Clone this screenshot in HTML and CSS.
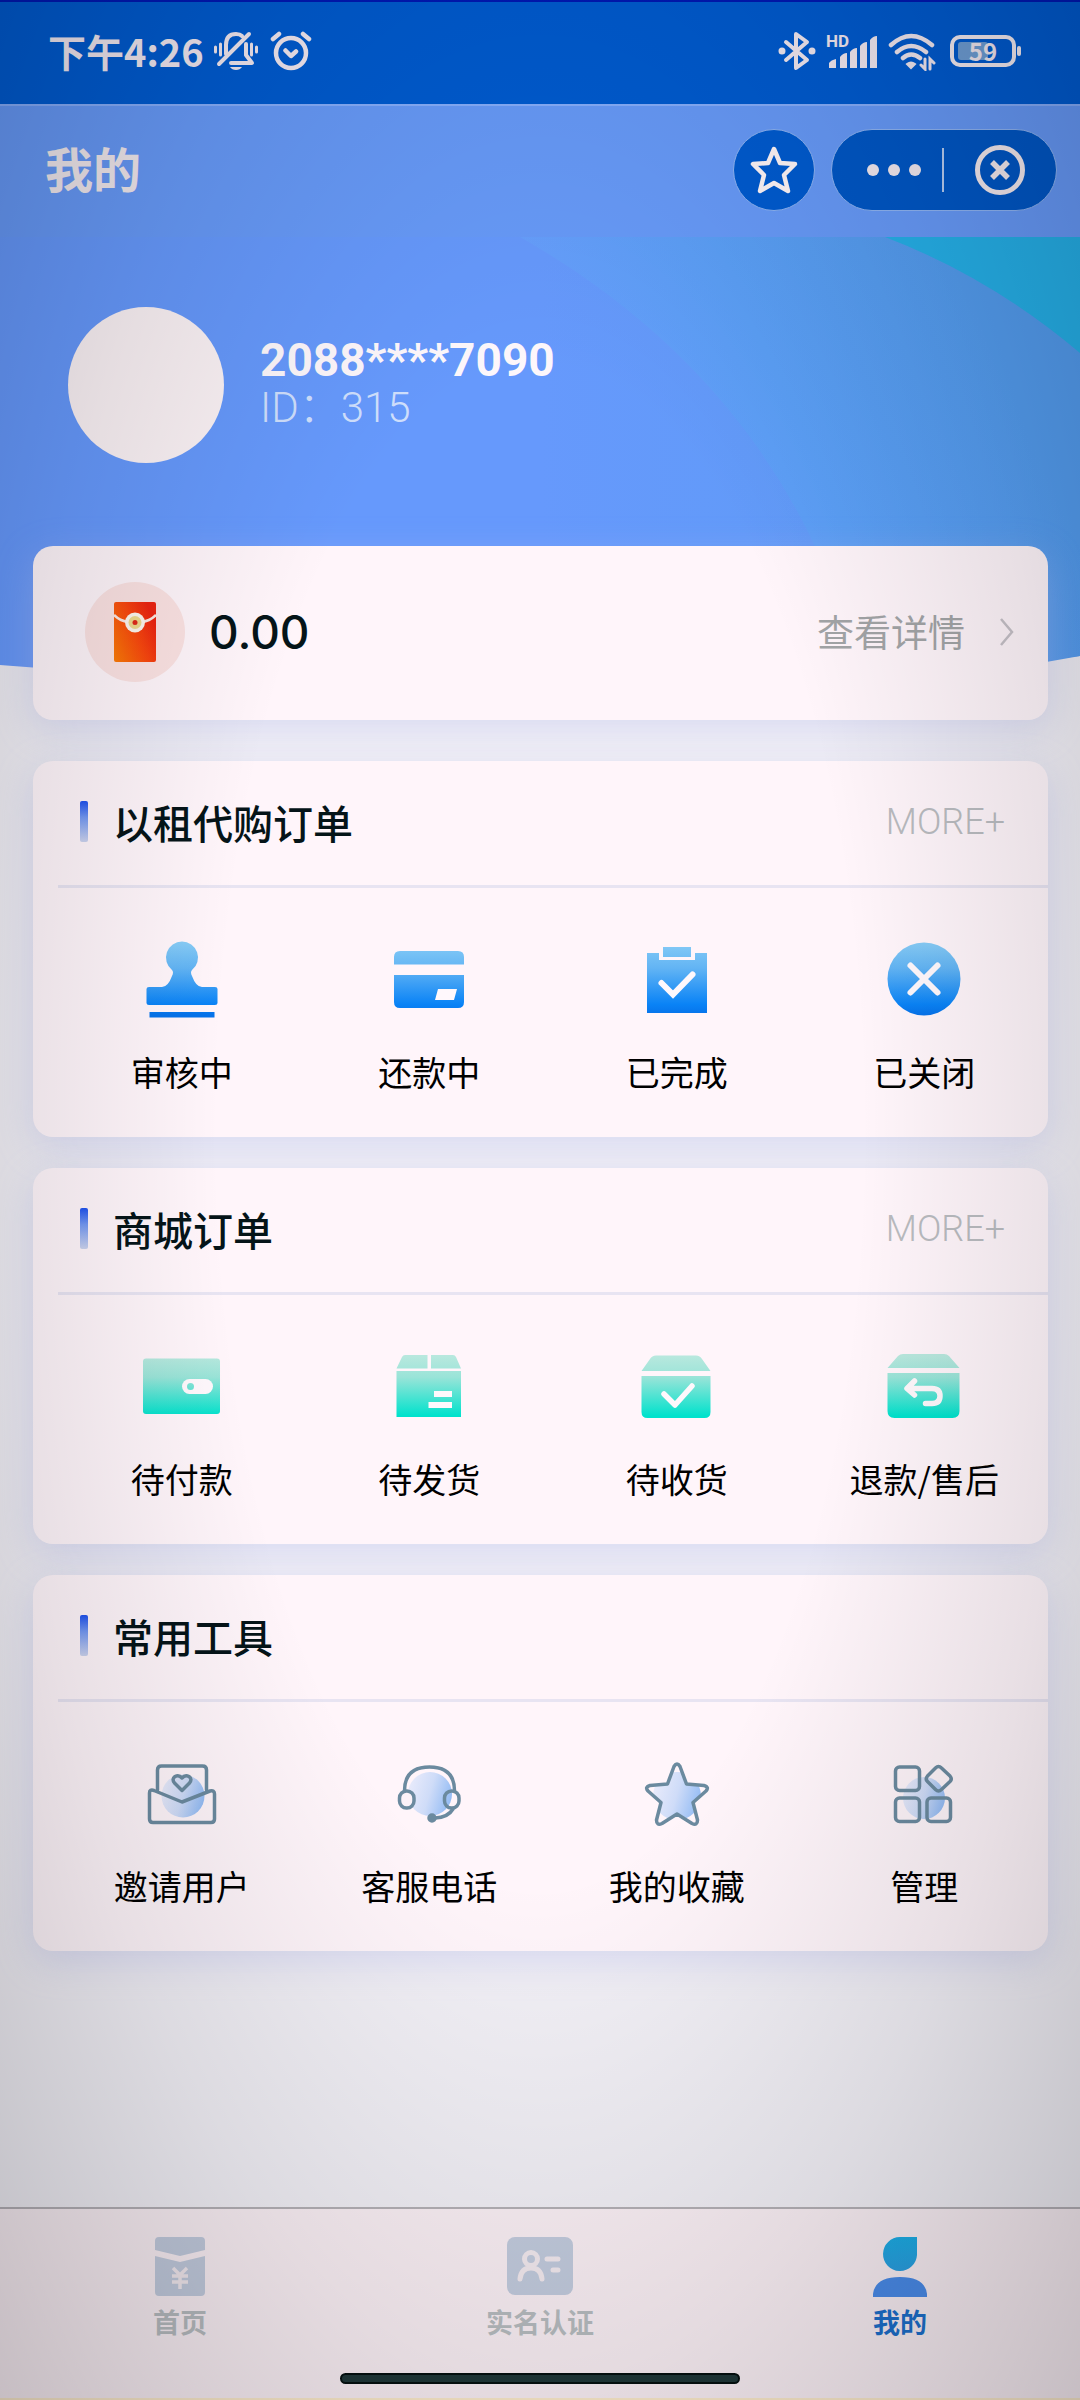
FILE: index.html
```html
<!DOCTYPE html>
<html lang="zh-CN">
<head>
<meta charset="utf-8">
<meta name="viewport" content="width=device-width, initial-scale=1">
<title>我的</title>
<link rel="stylesheet" href="styles.css">
</head>
<body>
<svg class="defs" aria-hidden="true">
  <defs>
    <linearGradient id="blue" gradientUnits="userSpaceOnUse" x1="0" y1="4" x2="0" y2="76"><stop offset="0" stop-color="#86cbf6"/><stop offset="0.35" stop-color="#62b4f4"/><stop offset="0.85" stop-color="#0a83f6"/><stop offset="1" stop-color="#0672ea"/></linearGradient>
    <linearGradient id="mint" gradientUnits="userSpaceOnUse" x1="0" y1="10" x2="0" y2="70"><stop offset="0" stop-color="#b8e8de"/><stop offset="0.35" stop-color="#9ae4d8"/><stop offset="1" stop-color="#00e2cc"/></linearGradient>
    <linearGradient id="haze" x1="0" y1="0.3" x2="1" y2="0.6"><stop offset="0" stop-color="#e9ebfb"/><stop offset="0.5" stop-color="#cfdcf8"/><stop offset="1" stop-color="#92bbf4"/></linearGradient>
    <linearGradient id="packet" x1="0" y1="1" x2="1" y2="0.4"><stop offset="0" stop-color="#fb7c06"/><stop offset="0.6" stop-color="#f9470e"/><stop offset="1" stop-color="#ec2411"/></linearGradient>
    <linearGradient id="person" x1="0" y1="0" x2="0" y2="1"><stop offset="0" stop-color="#1caee6"/><stop offset="1" stop-color="#2aa0e2"/></linearGradient>
    <linearGradient id="sky" x1="0" y1="0" x2="1" y2="0"><stop offset="0" stop-color="#6699fc"/><stop offset="0.5" stop-color="#6699fc"/><stop offset="1" stop-color="#5c9cf4"/></linearGradient>
    <linearGradient id="wave" gradientUnits="userSpaceOnUse" x1="620" y1="300" x2="1000" y2="130"><stop offset="0" stop-color="#689efd"/><stop offset="0.5" stop-color="#5b9ff6"/><stop offset="1" stop-color="#539cee"/></linearGradient>
  </defs>
</svg>

<div class="page">
  <div class="statusbar">
    <div class="status-group">
      <span class="clock">下午4:26</span>
      <svg class="bell" viewBox="0 0 44 40" fill="none" stroke="#f3eaf2" stroke-width="4" stroke-linecap="round" stroke-linejoin="round">
        <path d="M12 23V14Q12 3 22 3Q26 3 28 5M32 13V24L38 32H17M5 33L35 3"/>
        <path d="M16 36H28Q26 39 22 39Q18 39 16 36Z" fill="#f3eaf2" stroke="none"/>
        <path d="M1.500 16V21M6.500 13V24M37.500 13V24M42.500 16V21" stroke-width="3"/>
      </svg>
      <svg class="alarm" viewBox="0 0 42 40" fill="none" stroke="#f3eaf2" stroke-width="4.500" stroke-linecap="round" stroke-linejoin="round">
        <circle cx="21" cy="22" r="15"/><path d="M15.500 19.500L21 25L26 20.500M3 8L9 3M39 8L33 3"/>
      </svg>
    </div>
    <div class="status-group status-right">
      <svg class="bt" viewBox="0 0 38 40" fill="none" stroke="#f3eaf2" stroke-width="4" stroke-linecap="round" stroke-linejoin="round">
        <path d="M8 11L29 29L18 37V3L29 11L8 29"/><circle cx="4" cy="20" r="2.500" fill="#f3eaf2" stroke-width="2"/><circle cx="34" cy="20" r="2.500" fill="#f3eaf2" stroke-width="2"/>
      </svg>
      <svg class="signal" viewBox="0 0 52 40" fill="#f3eaf2">
        <path d="M3 37V32Q5 29 10 28V37ZM14 37V26Q17 22 21 22V37ZM24 37V21Q27 17 31 17V37ZM34 37V15Q37 11 41 11V37ZM44 37V9Q47 5 51 5V37Z"/>
        <text class="hd" x="0" y="16">HD</text>
      </svg>
      <svg class="wifi" viewBox="0 0 48 40" fill="none" stroke="#f3eaf2" stroke-width="4.500" stroke-linecap="round">
        <path d="M3 14Q23 -4 44 14M9 21Q23 9 38 21M15 27Q23 20 32 27"/><path d="M19 33Q23 30 27 33L23 37Z" fill="#f3eaf2" stroke-width="2"/><path d="M37 28V38L33 34M42 38V28L46 32" stroke-width="3"/>
      </svg>
      <div class="battery"><span class="battery-fill"></span><span class="battery-text">59</span></div>
    </div>
  </div>

  <header class="topbar">
    <h1 class="topbar-title">我的</h1>
    <div class="topbar-actions">
      <button class="fav" type="button" aria-label="收藏">
        <svg viewBox="0 0 48 48" fill="none" stroke="#fff6f8" stroke-width="4.500" stroke-linejoin="round"><path d="M24 3L30 17L45 18L34 29L38 45L24 37L10 45L14 29L3 18L18 17Z"/></svg>
      </button>
      <div class="capsule">
        <button class="capsule-btn more" type="button" aria-label="更多"><svg viewBox="0 0 54 12" fill="#f3eaf0"><circle cx="6" cy="6" r="6"/><circle cx="27" cy="6" r="6"/><circle cx="48" cy="6" r="6"/></svg></button>
        <button class="capsule-btn close" type="button" aria-label="关闭"><svg viewBox="0 0 52 52" fill="none" stroke="#f6ecf0" stroke-width="5"><circle cx="26" cy="26" r="22.500"/><path d="M18 18L34 34M34 18L18 34" stroke-width="5.500"/></svg></button>
      </div>
    </div>
  </header>

  <main class="content">
    <section class="hero">
      <svg class="hero-bg" viewBox="0 0 1080 453" preserveAspectRatio="none" aria-hidden="true">
        <path d="M0 0H1080V419Q810 450 540 450Q270 450 0 428Z" fill="url(#sky)"/>
        <path d="M520 0Q730 120 820 320Q850 385 862 445Q980 438 1080 419V0Z" fill="url(#wave)"/>
        <path d="M885 0Q990 40 1080 116V0Z" fill="#25b0e8"/>
      </svg>
      <div class="avatar"></div>
      <div class="who">
        <strong class="phone">2088****7090</strong>
        <span class="uid">ID：315</span>
      </div>
    </section>

    <a class="card wallet" href="#balance">
      <span class="packet"><svg viewBox="0 0 42 60"><rect x="0" y="0" width="42" height="60" rx="2" fill="url(#packet)"/><path d="M0 13Q6 19 14 20M42 13Q36 19 28 20" fill="none" stroke="#fbe9e4" stroke-width="2.500"/><circle cx="21" cy="20.500" r="10" fill="#fdf6ee"/><circle cx="21" cy="20.500" r="6.500" fill="#efd98c"/><circle cx="21" cy="20.500" r="2.500" fill="#e02a18"/></svg></span>
      <span class="amount">0.00</span>
      <span class="detail">查看详情</span>
      <svg class="chevron" viewBox="0 0 14 28" fill="none" stroke="#c6c1c7" stroke-width="2.500"><path d="M1 1L12 14L1 27"/></svg>
    </a>

    <section class="card panel">
      <div class="panel-head"><h2 class="panel-title">以租代购订单</h2><a class="more-link" href="#rent">MORE+</a></div>
      <nav class="tiles">
        <a class="tile" href="#review"><svg class="tile-icon" viewBox="0 0 80 80" fill="url(#blue)"><path d="M40 2.500A16 16 0 0 1 50 31Q48 33 50 37Q54 48 60 48H73Q75.500 48 75.500 50V64Q75.500 66 73 66H7Q4.500 66 4.500 64V50Q4.500 48 7 48H20Q26 48 30 37Q32 33 30 31A16 16 0 0 1 40 2.500Z"/><rect x="7.500" y="73" width="65" height="5.500"/></svg>审核中</a>
        <a class="tile" href="#repay"><svg class="tile-icon" viewBox="0 0 80 80" fill="url(#blue)"><path d="M5 25.500V18Q5 12 11 12H69Q75 12 75 18V25.500ZM5 36H75V63Q75 69 69 69H11Q5 69 5 63Z"/><path d="M49 50H68L65 61H46Z" fill="#fff8fc"/></svg>还款中</a>
        <a class="tile" href="#done"><svg class="tile-icon" viewBox="0 0 80 80" fill="url(#blue)"><path d="M10 14H22V21H58V14H70V74H10Z"/><rect x="26" y="8" width="28" height="10"/><path d="M24.500 44L36 55.500L55.500 35.500" fill="none" stroke="#fff8fc" stroke-width="6" stroke-linecap="round"/></svg>已完成</a>
        <a class="tile" href="#closed"><svg class="tile-icon" viewBox="0 0 80 80" fill="url(#blue)"><circle cx="40" cy="40" r="36.500"/><path d="M26.500 26.500L53.500 53.500M53.500 26.500L26.500 53.500" stroke="#fff8fc" stroke-width="6" stroke-linecap="round"/></svg>已关闭</a>
      </nav>
    </section>

    <section class="card panel">
      <div class="panel-head"><h2 class="panel-title">商城订单</h2><a class="more-link" href="#mall">MORE+</a></div>
      <nav class="tiles">
        <a class="tile" href="#pay"><svg class="tile-icon" viewBox="0 0 80 80" fill="url(#mint)"><rect x="1" y="12.500" width="77" height="55.500" rx="3"/><rect x="40" y="33" width="31" height="15" rx="7.500" fill="#fff8fc"/><circle cx="48.500" cy="40.500" r="3.500"/></svg>待付款</a>
        <a class="tile" href="#ship"><svg class="tile-icon" viewBox="0 0 80 80" fill="url(#mint)"><path d="M16 9H38.500V22.500H7.500L13 11Q14 9 16 9ZM42 9H64Q66 9 67 11L72 22.500H42ZM7.500 25H72V71H7.500Z"/><path d="M45 45H63V51H45ZM39.500 56H63V62H39.500Z" fill="#fff8fc"/></svg>待发货</a>
        <a class="tile" href="#receive"><svg class="tile-icon" viewBox="0 0 80 80" fill="url(#mint)"><path d="M4.500 25L13 13Q15 9.500 19 9.500H59Q63 9.500 65 13L73.500 25ZM4.500 30H73.500V66Q73.500 72 67.500 72H10.500Q4.500 72 4.500 66Z"/><path d="M27 48L38 59L55 40" fill="none" stroke="#fff8fc" stroke-width="5.500" stroke-linecap="round" stroke-linejoin="round"/></svg>待收货</a>
        <a class="tile" href="#refund"><svg class="tile-icon" viewBox="0 0 80 80" fill="url(#mint)"><path d="M3.500 22L14 10Q16 8 19 8H60Q63 8 65 10L75.500 22ZM3.500 27H75.500V65Q75.500 72 68.500 72H10.500Q3.500 72 3.500 65Z"/><path d="M30.500 35L23 42.500L30.500 49M25 42.500H48Q56 42.500 56 50Q56 57.500 48 57.500H41.500" fill="none" stroke="#fff8fc" stroke-width="5.500" stroke-linecap="round" stroke-linejoin="round"/></svg>退款/售后</a>
      </nav>
    </section>

    <section class="card panel">
      <div class="panel-head"><h2 class="panel-title">常用工具</h2></div>
      <nav class="tiles">
        <a class="tile" href="#invite"><svg class="tile-icon line" viewBox="0 0 80 80"><circle class="blob" cx="41" cy="43" r="21.500"/><path d="M15.500 37V17Q15.500 13 19.500 13H60.500Q64.500 13 64.500 17V37"/><path d="M7.500 40Q7.500 36 12 37.500L40 49L68 38Q72.500 37 72.500 41V66Q72.500 69.500 69 69.500H11Q7.500 69.500 7.500 66Z"/><path d="M40 37.500L32.500 30Q29.500 26 33 23.500Q37 21.500 40 25Q43 21.500 47 23.500Q50.500 26 47.500 30Z"/></svg>邀请用户</a>
        <a class="tile" href="#service"><svg class="tile-icon line" viewBox="0 0 80 80"><circle class="blob" cx="41" cy="41" r="22"/><path d="M15.500 38Q15.500 14 40.500 14Q65.500 14 65.500 38"/><rect x="10.500" y="38" width="14.500" height="17" rx="7" fill="#fbf2f8"/><rect x="55.500" y="38" width="14.500" height="17" rx="7"/><path d="M64 56Q59 64.500 46 65"/><circle cx="43" cy="65" r="3" fill="#6b8a9f"/></svg>客服电话</a>
        <a class="tile" href="#favorites"><svg class="tile-icon line" viewBox="0 0 80 80"><clipPath id="starclip"><path d="M40 10L50 32L71 34L55 50L60 71L40 60L20 71L25 50L9 34L30 32Z"/></clipPath><circle class="blob" cx="40" cy="43" r="24" clip-path="url(#starclip)"/><path d="M37 13.500Q40 8.500 43 13.500L49.500 31L67 32.500Q72.500 34 69 38L56 49.500L60.500 67Q60.500 73 55 70.500L40 61L25 70.500Q19.500 73 19.500 67L24 49.500L11 38Q7.500 34 13 32.500L30.500 31Z"/></svg>我的收藏</a>
        <a class="tile" href="#manage"><svg class="tile-icon line" viewBox="0 0 80 80"><circle class="blob" cx="40" cy="45" r="21"/><rect x="11.500" y="14" width="24" height="23.500" rx="4"/><rect x="11.500" y="45" width="24" height="23.500" rx="4"/><rect x="43" y="45" width="23.500" height="23.500" rx="4"/><path d="M51.500 15Q54.500 12 57.500 15L66 23Q68.500 26 66 28.500L57.500 36.500Q54.500 39.500 51.500 36.500L43.500 28.500Q41 26 43.500 23Z"/></svg>管理</a>
      </nav>
    </section>
  </main>

  <nav class="tabbar">
    <div class="tabs">
      <a class="tab" href="#home"><svg class="tab-icon" viewBox="0 0 66 60" fill="#c3ccde"><path d="M8 4Q8 0 12 0H54Q58 0 58 4V13L33 19L8 13ZM8 19L33 25L58 19V55Q58 59 54 59H12Q8 59 8 55Z"/><path d="M26 31L33 38L40 31M33 38V52M25 39H41M25 45H41" fill="none" stroke="#f3eaef" stroke-width="3.500"/></svg>首页</a>
      <a class="tab" href="#verify"><svg class="tab-icon" viewBox="0 0 66 60"><rect x="0" y="0" width="66" height="58" rx="8" fill="#c3ccde"/><g fill="none" stroke="#f3eaef" stroke-width="5" stroke-linecap="round"><circle cx="24" cy="22" r="6.500"/><path d="M13 42Q14 31 24 31Q34 31 35 42M40 22H51M46 33H51"/></g></svg>实名认证</a>
      <a class="tab active" href="#me" aria-current="page"><svg class="tab-icon" viewBox="0 0 66 60"><path d="M33 0H50V18A17 17 0 1 1 33 0Z" fill="url(#person)"/><path d="M6 60V57Q8 40 33 40Q58 40 60 57V60Z" fill="#4a8cea"/></svg>我的</a>
    </div>
    <div class="home-indicator"></div>
  </nav>
  <div class="vignette" aria-hidden="true"></div>
</div>
</body>
</html>
```
FILE: styles.css
```css
* { box-sizing: border-box; }
body { margin: 0; font-family: "Noto Sans CJK SC", "Noto Sans", sans-serif; color: #051418; background: #f2f0f6; }
a { color: inherit; text-decoration: none; }
h1, h2 { margin: 0; font-weight: 500; }
button { margin: 0; padding: 0; border: 0; background: none; font: inherit; }
svg { display: block; }
.defs { position: absolute; width: 0; height: 0; }

.page { position: relative; min-height: 100vh; display: flex; flex-direction: column; }
.vignette { position: absolute; inset: 0; pointer-events: none; background: radial-gradient(ellipse farthest-corner at 50% 47%, rgba(0,0,0,0) 42%, rgba(0,0,8,.09) 70%, rgba(0,0,8,.21) 100%); }

.statusbar { height: 104px; padding: 0 64px 4px 48px; display: flex; align-items: center; justify-content: space-between; background: #005bd0; border-top: 2px solid #0018b4; color: #f3eaf2; }
.status-group { display: flex; align-items: center; gap: 12px; }
.clock { font-size: 38px; font-weight: 700; line-height: 56px; margin-right: -2px; }
.bell { width: 44px; height: 40px; }
.alarm { width: 42px; height: 40px; }
.bt { width: 38px; height: 40px; }
.signal { width: 52px; height: 40px; overflow: visible; }
.hd { font: 700 17px Roboto, sans-serif; }
.wifi { width: 48px; height: 40px; }
.status-right { gap: 10px; }
.battery { position: relative; width: 66px; height: 32px; margin-left: 4px; border: 4px solid #f6eef4; border-radius: 10px; display: flex; align-items: center; justify-content: center; }
.battery::after { content: ""; position: absolute; right: -9px; top: 7px; width: 4px; height: 10px; border-radius: 2px; background: #f6eef4; }
.battery-fill { position: absolute; left: 4px; top: 3px; bottom: 3px; width: 52%; border-radius: 3px; background: #6f9fd6; }
.battery-text { position: relative; font-size: 24px; font-weight: 700; line-height: 24px; }

.topbar { height: 133px; padding: 0 23px 4px 45px; display: flex; align-items: center; justify-content: space-between; background: #679af8; border-top: 2px solid #86aefb; color: #f3ebef; }
.topbar-title { font-size: 48px; line-height: 70px; font-weight: 700; padding-bottom: 6px; }
.topbar-actions { display: flex; align-items: center; gap: 16px; }
.fav { width: 82px; height: 82px; border-radius: 50%; background: #005bd0; border: 1px solid #8fb5f4; display: flex; align-items: center; justify-content: center; }
.fav svg { width: 48px; height: 48px; }
.capsule { width: 226px; height: 82px; border-radius: 41px; background: #0057c6; border: 1px solid #8fb5f4; display: flex; align-items: center; }
.capsule-btn { width: 50%; height: 44px; display: flex; align-items: center; justify-content: center; }
.more { border-right: 2px solid #b8cdf0; padding-left: 14px; }
.more svg { width: 54px; height: 12px; }
.close svg { width: 52px; height: 52px; }

.content { flex: 1; }
.hero { position: relative; height: 453px; padding: 70px 68px 0; display: flex; align-items: flex-start; gap: 36px; }
.hero-bg { position: absolute; inset: 0; width: 100%; height: 100%; }
.avatar { position: relative; width: 156px; height: 156px; border-radius: 50%; background: #fcf3f6; }
.who { position: relative; display: flex; flex-direction: column; padding-top: 26px; font-family: Roboto, "Noto Sans CJK SC", sans-serif; }
.phone { font-size: 46px; line-height: 54px; font-weight: 700; color: #fdf7fb; }
.uid { font-size: 42px; line-height: 50px; font-weight: 300; color: #cfdffc; margin-top: -4px; }

.card { display: block; position: relative; margin: 0 32px 31px 33px; border-radius: 20px; background: #fff5fa; box-shadow: 0 10px 36px rgba(176,184,236,.38); }
.wallet { display: flex; align-items: center; height: 174px; margin-top: -144px; margin-bottom: 41px; padding: 0 34px 2px 52px; }
.packet { width: 100px; height: 100px; border-radius: 50%; background: #fbe2e2; display: flex; align-items: center; justify-content: center; }
.packet svg { width: 42px; height: 60px; }
.amount { margin-left: 24px; font-family: Inter, sans-serif; font-size: 46px; line-height: 60px; font-weight: 500; }
.detail { margin-left: auto; font-size: 37px; line-height: 54px; color: #a2a4a6; padding-bottom: 2px; }
.chevron { width: 14px; height: 28px; margin-left: 35px; }

.panel { padding-left: 25px; }
.panel-head { height: 127px; padding: 0 43px 3px 22px; border-bottom: 3px solid #e8e4f2; display: flex; align-items: center; justify-content: space-between; }
.panel-title { display: flex; align-items: center; gap: 25px; font-size: 40px; line-height: 58px; font-weight: 500; }
.panel-title::before { content: ""; width: 8px; height: 41px; border-radius: 2px; background: linear-gradient(#1f52ee, #7398f2 40%, #ccd3ee); }
.more-link { font-family: Roboto, sans-serif; font-size: 36px; line-height: 50px; font-weight: 300; color: #b9bbbf; }
.tiles { display: grid; grid-template-columns: repeat(4, 1fr); padding: 51px 0 40px; }
.tile { display: flex; flex-direction: column; align-items: center; gap: 28px; font-size: 34px; line-height: 50px; color: #000; white-space: nowrap; }
.tile-icon { width: 80px; height: 80px; }
.line { fill: none; stroke: #6b8a9f; stroke-width: 3.5px; stroke-linejoin: round; stroke-linecap: round; }
.blob { fill: url(#haze); stroke: none; }

.tabbar { height: 193px; background: #fbf0f5; border-top: 2px solid #b5b1b6; border-bottom: 2px solid #fdeccb; display: flex; flex-direction: column; align-items: center; justify-content: space-between; padding: 28px 0 14px; }
.tabs { width: 100%; display: grid; grid-template-columns: repeat(3, 1fr); }
.tab { display: flex; flex-direction: column; align-items: center; gap: 6px; font-size: 27px; line-height: 38px; font-weight: 700; color: #b8bdc0; }
.tab-icon { width: 66px; height: 60px; }
.active { color: #1c70cc; }
.home-indicator { width: 37%; height: 11px; border-radius: 6px; background: #1f3838; border: 2px solid #04100f; }
```
